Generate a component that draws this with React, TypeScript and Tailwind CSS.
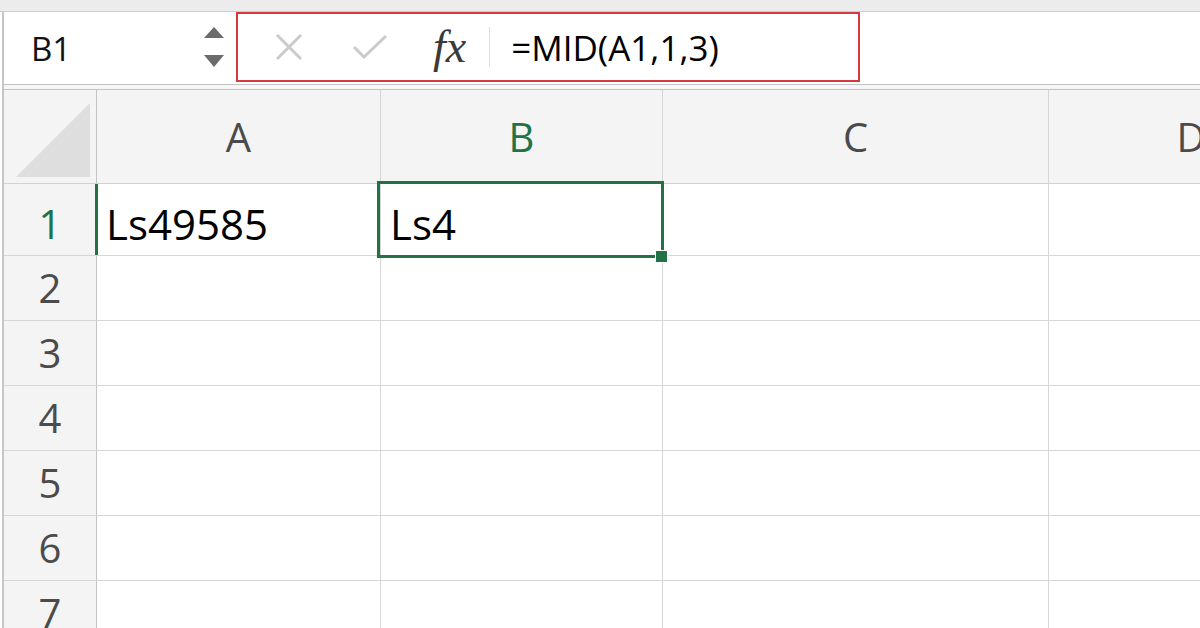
const GREEN = '#217346'

function XIcon() {
  return (
    <svg width="28" height="28" viewBox="0 0 28 28" fill="none">
      <path d="M2 2 L26 26 M26 2 L2 26" stroke="#cacaca" strokeWidth="3" />
    </svg>
  )
}

function CheckIcon() {
  return (
    <svg width="36" height="26" viewBox="0 0 36 26" fill="none">
      <path d="M2 13 L12 23 L34 2" stroke="#cacaca" strokeWidth="3" />
    </svg>
  )
}

function Spinner() {
  return (
    <svg width="20" height="42" viewBox="0 0 20 42">
      <path d="M10 0 L20 11 L0 11 Z" fill="#6b6b6b" />
      <path d="M0 28 L20 28 L10 40 Z" fill="#6b6b6b" />
    </svg>
  )
}

function Corner() {
  return (
    <svg width="74" height="74" viewBox="0 0 74 74">
      <path d="M74 0 L74 74 L0 74 Z" fill="#dedede" />
    </svg>
  )
}

const rows = [2, 3, 4, 5, 6, 7]

export default function App() {
  return (
    <div className="w-[1200px] h-[628px] overflow-hidden bg-white font-['Open_Sans',sans-serif] text-[#111]">
      <div className="h-[12px] bg-[#ececec] border-b border-[#cdcdcd]" />
      <div className="ml-[2px] border-l-2 border-[#c6c6c6]">
        {/* formula bar */}
        <div className="h-[73px] flex border-b border-[#c2c2c2]">
          <div className="w-[232px] flex items-center pl-[27px] pr-[12px] bg-white">
            <span className="text-[33px] leading-none flex-1">B1</span>
            <Spinner />
          </div>
          <div className="w-[624px] h-[70px] border-2 border-[#d63a41] flex items-center pl-[37px] bg-white">
            <XIcon />
            <div className="ml-[49px]">
              <CheckIcon />
            </div>
            <span className="ml-[45px] font-['Liberation_Serif',serif] italic text-[46px] leading-none text-[#3a3a3a]">
              fx
            </span>
            <div className="ml-[23px] w-px h-[40px] bg-[#dddddd]" />
            <span className="ml-[21px] text-[35px] leading-none text-black">=MID(A1,1,3)</span>
          </div>
          <div className="flex-1 bg-white" />
        </div>
        <div className="h-[5px] bg-[#f6f6f6] border-b border-[#c2c2c2]" />

        {/* header row */}
        <div className="h-[94px] flex border-b border-[#d2d2d2] bg-[#f4f4f4] text-[40px] leading-none text-[#4b4b4b]">
          <div className="w-[93px] shrink-0 border-r border-[#c4c4c4] flex items-end pl-[12px] pb-[6px]">
            <Corner />
          </div>
          <div className="w-[284px] shrink-0 border-r border-[#d6d6d6] flex items-center justify-center">A</div>
          <div className="w-[282px] shrink-0 border-r border-[#d6d6d6] flex items-center justify-center text-[#217346]">B</div>
          <div className="w-[386px] shrink-0 border-r border-[#d6d6d6] flex items-center justify-center">C</div>
          <div className="w-[284px] shrink-0 flex items-center justify-center">D</div>
        </div>

        {/* row 1 */}
        <div className="h-[72px] flex border-b border-[#d6d6d6] text-[42px] leading-none">
          <div className="relative w-[93px] shrink-0 border-r border-[#c4c4c4] bg-[#f4f4f4] flex items-end justify-center pb-[11px] text-[40px] text-[#217346]">
            1
            <div className="absolute right-[-2px] top-0 bottom-0 w-[3px] bg-[#217346]" />
          </div>
          <div className="w-[284px] shrink-0 border-r border-[#d6d6d6] flex items-end pl-[9px] pb-[10px] text-black">Ls49585</div>
          <div className="relative w-[282px] shrink-0 border-r border-[#d6d6d6] flex items-end pl-[9px] pb-[10px] text-black">
            Ls4
            <div
              className="absolute left-[-4px] top-[-3px] w-[287px] h-[77px] border-[3px]"
              style={{ borderColor: GREEN }}
            />
            <div className="absolute left-[274px] top-[66px] w-[13px] h-[13px] bg-[#217346] border border-white" />
          </div>
          <div className="w-[386px] shrink-0 border-r border-[#d6d6d6]" />
          <div className="w-[284px] shrink-0" />
        </div>

        {rows.map((n) => (
          <div key={n} className="h-[65px] flex border-b border-[#d6d6d6] text-[40px] leading-none">
            <div className="w-[93px] shrink-0 border-r border-[#c4c4c4] bg-[#f4f4f4] flex items-center justify-center text-[#4b4b4b]">
              {n}
            </div>
            <div className="w-[284px] shrink-0 border-r border-[#d6d6d6]" />
            <div className="w-[282px] shrink-0 border-r border-[#d6d6d6]" />
            <div className="w-[386px] shrink-0 border-r border-[#d6d6d6]" />
            <div className="w-[284px] shrink-0" />
          </div>
        ))}
      </div>
    </div>
  )
}
